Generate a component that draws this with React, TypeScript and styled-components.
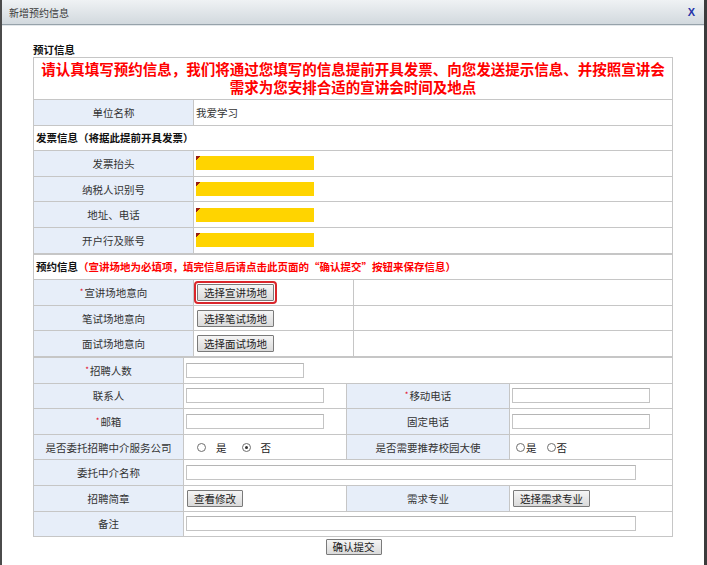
import React from 'react';
import styled, { createGlobalStyle } from 'styled-components';

const GlobalStyle = createGlobalStyle`
  html, body {
    margin: 0;
    padding: 0;
    background: #fff;
  }
  body {
    font-family: "Noto Sans CJK SC", "Noto Sans", sans-serif;
    font-size: 10.5px;
    color: #333;
  }
`;

const LINE = '#c6c6c6';
const LABEL_BG = '#e7eef9';

const Window = styled.div`
  width: 707px;
  height: 565px;
  box-sizing: border-box;
  border-left: 2px solid #4b4b4b;
  border-right: 3px solid #3c3c3c;
  background: #fff;
  display: flex;
  flex-direction: column;
  overflow: hidden;
`;

const TitleBar = styled.div`
  height: 24px;
  flex: none;
  display: flex;
  align-items: center;
  justify-content: space-between;
  padding: 0 9px 0 7px;
  background: linear-gradient(#eff2f4, #d2d9de);
  border-bottom: 1px solid #96a2aa;
  box-shadow: 0 1px 0 #e4e8eb;
`;

const Title = styled.span`
  font-size: 10px;
  color: #3a3a3a;
`;

const Close = styled.span`
  font-family: "Liberation Sans", Arial, sans-serif;
  font-size: 11px;
  font-weight: 700;
  color: #2433a8;
`;

const Body = styled.div`
  padding: 17px 0 0 31px;
  display: flex;
  flex-direction: column;
  width: 640px;
`;

const Caption = styled.div`
  height: 15px;
  line-height: 15px;
  font-weight: 700;
  color: #111;
`;

const Table = styled.div`
  border-top: 1px solid ${LINE};
  border-left: 1px solid ${LINE};
  display: flex;
  flex-direction: column;
`;

const Section = styled.div<{ $cols: string; $head?: string; $last?: boolean }>`
  display: grid;
  grid-template-columns: ${p => p.$cols};
  grid-template-rows: ${p => p.$head ?? 'none'};
  grid-auto-rows: 25.6px;
  border-bottom: ${p => (p.$last ? 'none' : `1px solid ${LINE}`)};
`;

const Cell = styled.div<{ $span?: number }>`
  box-sizing: border-box;
  border-right: 1px solid ${LINE};
  border-bottom: 1px solid ${LINE};
  display: flex;
  align-items: center;
  padding-left: 2px;
  grid-column: ${p => (p.$span ? `span ${p.$span}` : 'auto')};
  min-width: 0;
`;

const Label = styled(Cell)`
  justify-content: center;
  padding-left: 0;
  background: ${LABEL_BG};
  color: #333;
`;

const Notice = styled(Cell)`
  flex-direction: column;
  justify-content: center;
  text-align: center;
  color: #f00;
  font-weight: 700;
  font-size: 14.5px;
  line-height: 18px;
  padding: 0 0 1px;
`;

const NoticeLine = styled.span`
  display: block;
  white-space: nowrap;
`;

const HeadRow = styled(Cell)`
  font-weight: 700;
  color: #111;
`;

const Hint = styled.span`
  color: #f00;
`;

const Star = styled.span`
  color: #e2001a;
  font-size: 8px;
  margin-right: 1px;
  position: relative;
  top: -1px;
`;

const Value = styled(Cell)`
  padding-left: 2px;
`;

const YellowField = styled.div`
  width: 118px;
  height: 14px;
  background: linear-gradient(135deg, #9a1d10 0 3px, transparent 3.5px), #ffd400;
`;

const Field = styled.div<{ $w: number }>`
  box-sizing: border-box;
  width: ${p => p.$w}px;
  height: 15px;
  border: 1px solid #c4c4c4;
  border-top-color: #b5b5b5;
  background: #fff;
`;

const Button = styled.button<{ $focus?: boolean }>`
  font-family: inherit;
  font-size: 10.5px;
  color: #222;
  height: 17px;
  line-height: 15px;
  padding: 0 6px;
  border: 1px solid #7a7a7a;
  border-radius: 1px;
  background: linear-gradient(#f5f5f5, #dadada);
  margin-left: 1px;
  outline: ${p => (p.$focus ? '2px solid #d9262b' : 'none')};
  outline-offset: 1px;
  cursor: pointer;
`;

const Radios = styled.div<{ $tight?: boolean }>`
  display: flex;
  align-items: center;
  gap: ${p => (p.$tight ? '10px' : '15px')};
  padding-left: ${p => (p.$tight ? '4px' : '11px')};
`;

const RadioItem = styled.span<{ $tight?: boolean }>`
  display: inline-flex;
  align-items: center;
  gap: ${p => (p.$tight ? '1px' : '10px')};
  color: #222;
`;

const Dot = styled.span<{ $on?: boolean }>`
  box-sizing: border-box;
  width: 9px;
  height: 9px;
  border-radius: 50%;
  border: 1px solid #6f6f6f;
  background: #fff;
  display: inline-flex;
  align-items: center;
  justify-content: center;
  &::after {
    content: '';
    width: 3px;
    height: 3px;
    border-radius: 50%;
    background: ${p => (p.$on ? '#333' : 'transparent')};
  }
`;

const Footer = styled.div`
  display: flex;
  justify-content: center;
  padding-top: 2px;
`;

const SubmitButton = styled(Button)`
  height: 16px;
  line-height: 14px;
`;

const Radio: React.FC<{ label: string; on?: boolean; tight?: boolean }> = ({ label, on, tight }) => (
  <RadioItem $tight={tight}>
    <Dot $on={on} />
    {label}
  </RadioItem>
);

const invoiceRows = ['发票抬头', '纳税人识别号', '地址、电话', '开户行及账号'];

const venueRows = [
  { label: '宣讲场地意向', button: '选择宣讲场地', required: true },
  { label: '笔试场地意向', button: '选择笔试场地' },
  { label: '面试场地意向', button: '选择面试场地' },
];

export default function App() {
  return (
    <>
      <GlobalStyle />
      <Window>
        <TitleBar>
          <Title>新增预约信息</Title>
          <Close>X</Close>
        </TitleBar>
        <Body>
          <Caption>预订信息</Caption>
          <Table>
            <Section $cols="160px 1fr" $head="42px">
              <Notice $span={2}>
                <NoticeLine>请认真填写预约信息，我们将通过您填写的信息提前开具发票、向您发送提示信息、并按照宣讲会</NoticeLine>
                <NoticeLine>需求为您安排合适的宣讲会时间及地点</NoticeLine>
              </Notice>
              <Label>单位名称</Label>
              <Value>我爱学习</Value>
              <HeadRow $span={2}>发票信息（将据此提前开具发票）</HeadRow>
              {invoiceRows.map(r => (
                <React.Fragment key={r}>
                  <Label>{r}</Label>
                  <Value>
                    <YellowField />
                  </Value>
                </React.Fragment>
              ))}
            </Section>
            <Section $cols="160px 160px 1fr">
              <HeadRow $span={3}>
                预约信息<Hint>（宣讲场地为必填项，填完信息后请点击此页面的“确认提交”按钮来保存信息）</Hint>
              </HeadRow>
              {venueRows.map(r => (
                <React.Fragment key={r.label}>
                  <Label>
                    {r.required && <Star>*</Star>}
                    {r.label}
                  </Label>
                  <Value>
                    <Button $focus={r.required}>{r.button}</Button>
                  </Value>
                  <Cell />
                </React.Fragment>
              ))}
            </Section>
            <Section $cols="150px 163px 163px 1fr" $last>
              <Label><Star>*</Star>招聘人数</Label>
              <Value $span={3}><Field $w={118} /></Value>

              <Label>联系人</Label>
              <Value><Field $w={138} /></Value>
              <Label><Star>*</Star>移动电话</Label>
              <Value><Field $w={138} /></Value>

              <Label><Star>*</Star>邮箱</Label>
              <Value><Field $w={138} /></Value>
              <Label>固定电话</Label>
              <Value><Field $w={138} /></Value>

              <Label>是否委托招聘中介服务公司</Label>
              <Value>
                <Radios>
                  <Radio label="是" />
                  <Radio label="否" on />
                </Radios>
              </Value>
              <Label>是否需要推荐校园大使</Label>
              <Value>
                <Radios $tight>
                  <Radio label="是" tight />
                  <Radio label="否" tight />
                </Radios>
              </Value>

              <Label>委托中介名称</Label>
              <Value $span={3}><Field $w={450} /></Value>

              <Label>招聘简章</Label>
              <Value><Button>查看修改</Button></Value>
              <Label>需求专业</Label>
              <Value><Button>选择需求专业</Button></Value>

              <Label>备注</Label>
              <Value $span={3}><Field $w={450} /></Value>
            </Section>
          </Table>
          <Footer>
            <SubmitButton>确认提交</SubmitButton>
          </Footer>
        </Body>
      </Window>
    </>
  );
}
